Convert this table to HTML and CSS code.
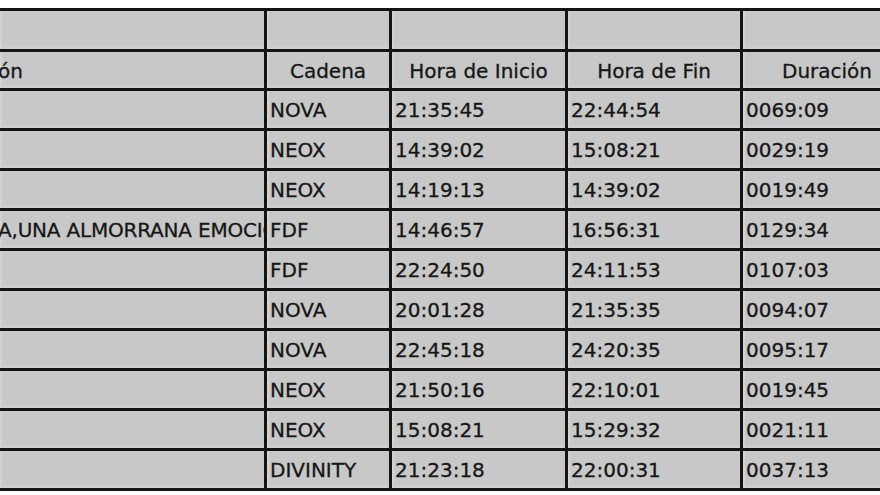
FILE: index.html
```html
<!DOCTYPE html>
<html lang="es">
<head>
<meta charset="utf-8">
<title>Emisiones</title>
<link rel="stylesheet" href="styles.css">
</head>
<body>
<div class="viewport">
  <div class="sheet">
    <div class="cell"></div><div class="cell"></div><div class="cell"></div><div class="cell"></div><div class="cell"></div>

    <div class="cell head first"><span class="clip">ón</span></div>
    <div class="cell head">Cadena</div>
    <div class="cell head">Hora de Inicio</div>
    <div class="cell head">Hora de Fin</div>
    <div class="cell head">Duración</div>

    <div class="cell"></div><div class="cell">NOVA</div><div class="cell">21:35:45</div><div class="cell">22:44:54</div><div class="cell">0069:09</div>
    <div class="cell"></div><div class="cell">NEOX</div><div class="cell">14:39:02</div><div class="cell">15:08:21</div><div class="cell">0029:19</div>
    <div class="cell"></div><div class="cell">NEOX</div><div class="cell">14:19:13</div><div class="cell">14:39:02</div><div class="cell">0019:49</div>
    <div class="cell first"><span class="clip long">A,UNA ALMORRANA EMOCIÓN</span></div><div class="cell">FDF</div><div class="cell">14:46:57</div><div class="cell">16:56:31</div><div class="cell">0129:34</div>
    <div class="cell"></div><div class="cell">FDF</div><div class="cell">22:24:50</div><div class="cell">24:11:53</div><div class="cell">0107:03</div>
    <div class="cell"></div><div class="cell">NOVA</div><div class="cell">20:01:28</div><div class="cell">21:35:35</div><div class="cell">0094:07</div>
    <div class="cell"></div><div class="cell">NOVA</div><div class="cell">22:45:18</div><div class="cell">24:20:35</div><div class="cell">0095:17</div>
    <div class="cell"></div><div class="cell">NEOX</div><div class="cell">21:50:16</div><div class="cell">22:10:01</div><div class="cell">0019:45</div>
    <div class="cell"></div><div class="cell">NEOX</div><div class="cell">15:08:21</div><div class="cell">15:29:32</div><div class="cell">0021:11</div>
    <div class="cell"></div><div class="cell">DIVINITY</div><div class="cell">21:23:18</div><div class="cell">22:00:31</div><div class="cell">0037:13</div>
  </div>
</div>
</body>
</html>
```

FILE: styles.css
```css
html, body {
  margin: 0;
  padding: 0;
  background: #ffffff;
}

.viewport {
  width: 880px;
  height: 495px;
  overflow: hidden;
  padding-top: 8px;
  box-sizing: border-box;
}

.sheet {
  display: grid;
  grid-template-columns: 264px 122px 173px 172px 168px;
  grid-template-rows: 38px 36px repeat(10, 37px);
  gap: 3px;
  padding: 3px 0;
  width: 911px;
  background: #141414;
  font-family: "DejaVu Sans", Verdana, sans-serif;
  font-size: 20px;
  color: #161616;
  -webkit-text-stroke: 0.3px #161616;
}

.cell {
  background: #c8c8c8;
  display: flex;
  align-items: center;
  padding-left: 3px;
  white-space: nowrap;
  overflow: hidden;
  box-shadow: inset 2px 0 0 #d3d3d3, inset 0 -2px 0 #d0d0d0;
}

.head {
  justify-content: center;
  padding-left: 0;
  padding-top: 2px;
}

.first {
  justify-content: flex-start;
  padding-left: 0;
}

.clip {
  margin-left: -2px;
  min-width: 0;
  overflow: hidden;
}

.long {
  letter-spacing: -0.2px;
}
```
